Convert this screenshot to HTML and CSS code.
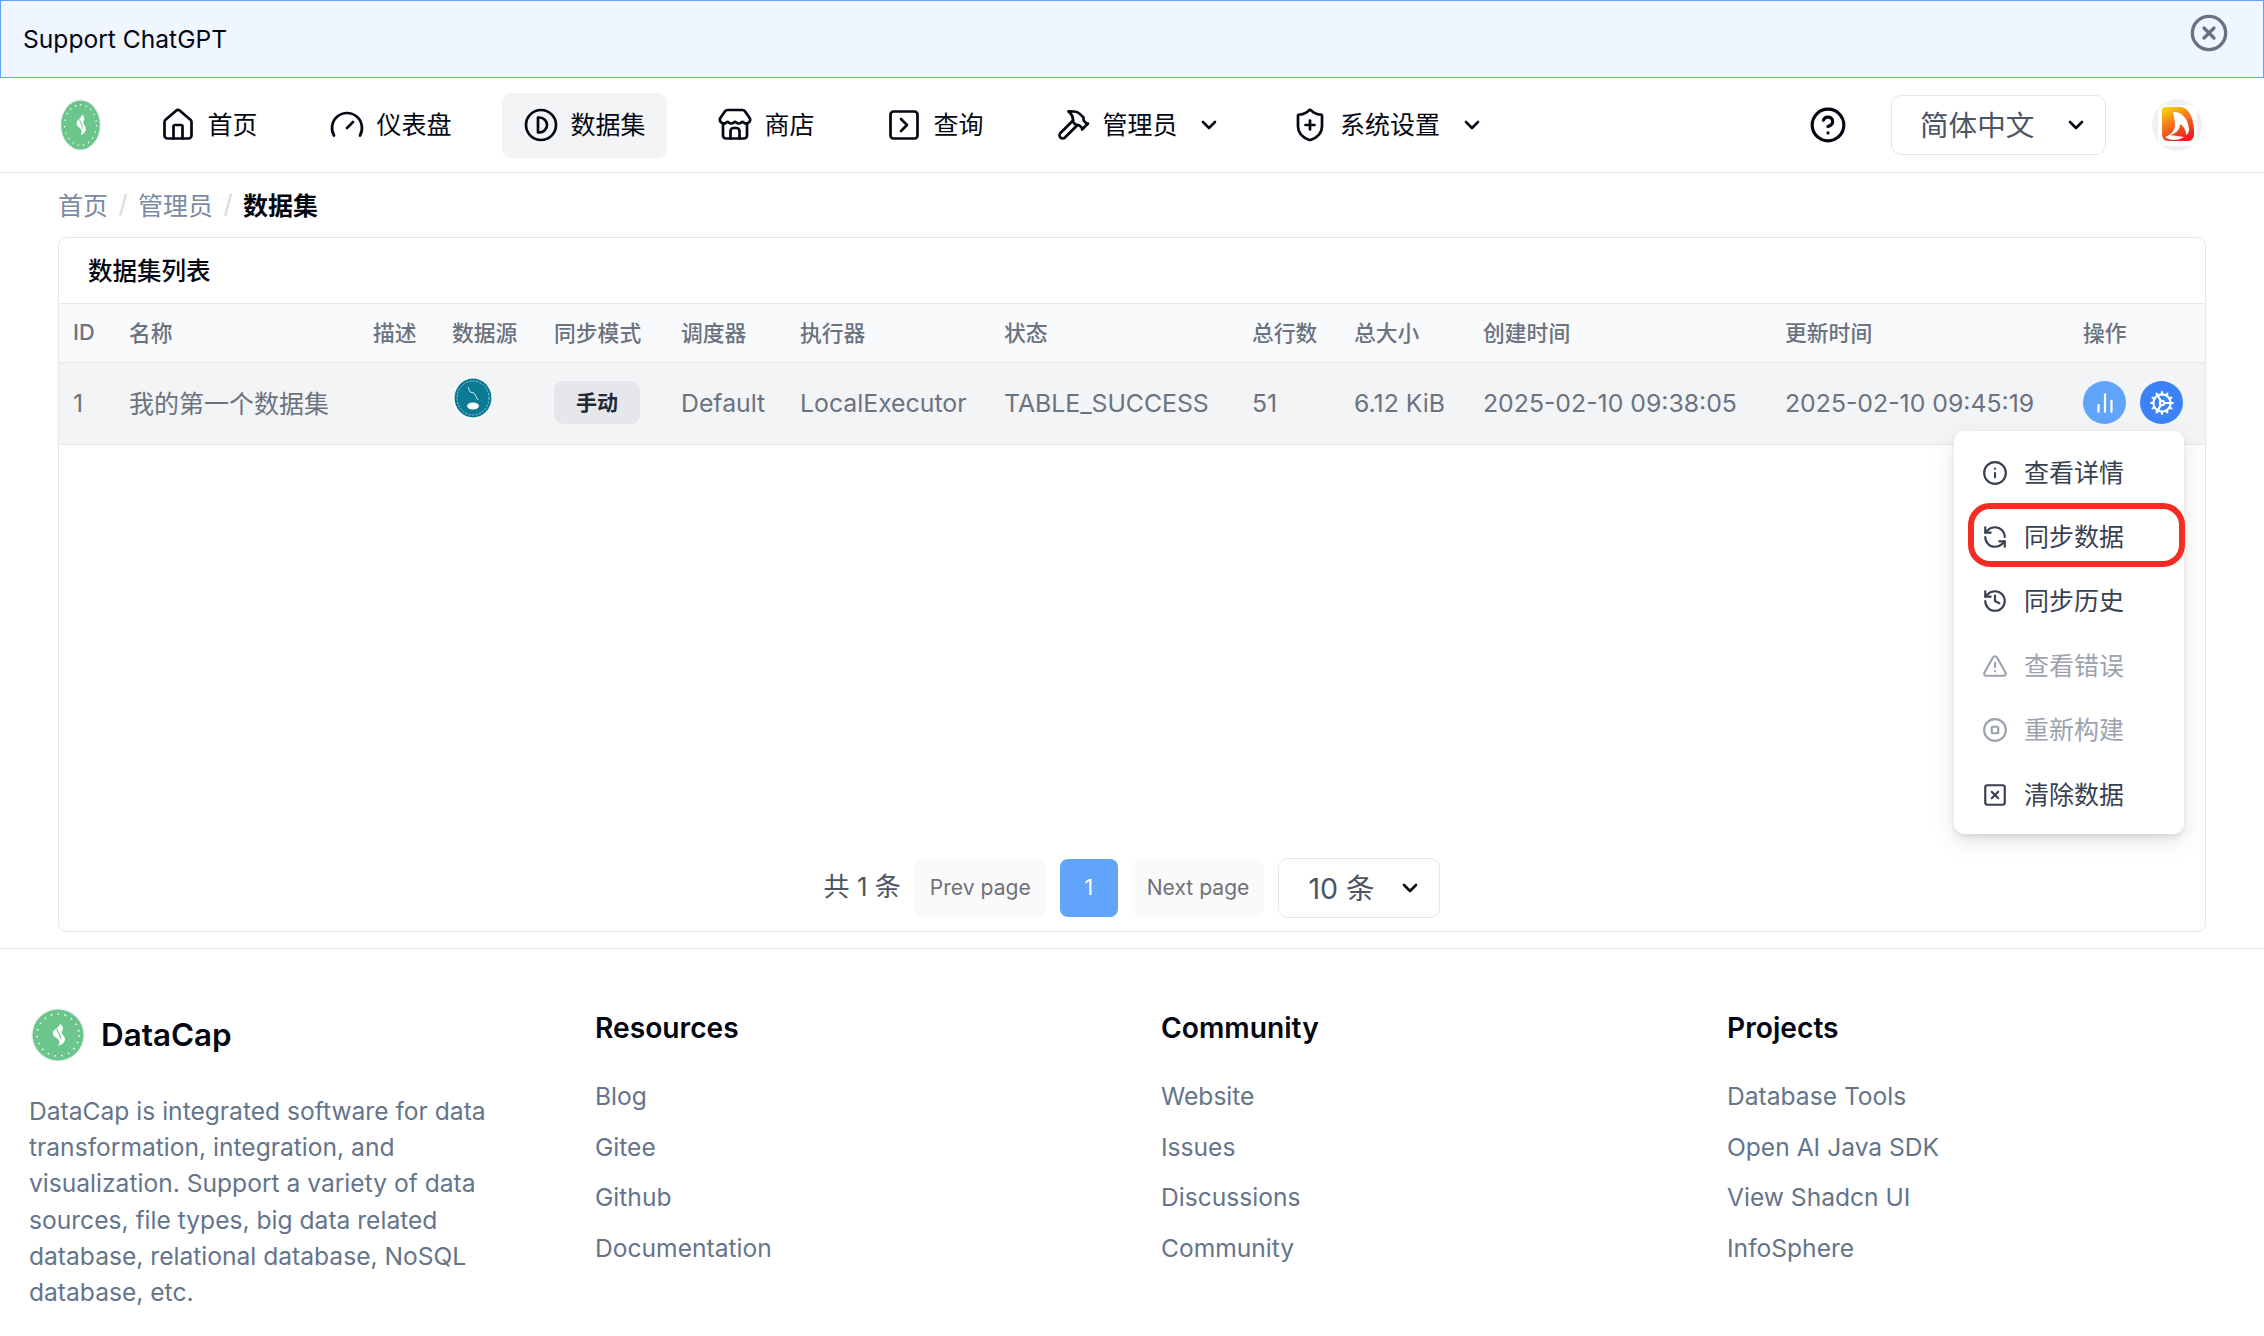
FILE: index.html
```html
<!DOCTYPE html>
<html lang="zh-CN">
<head>
    <meta charset="UTF-8">
    <title>DataCap - 数据集</title>
    <link rel="stylesheet" href="styles.css">
</head>
<body>
    <svg class="defs" width="0" height="0">
        <symbol id="logo" viewBox="0 0 54 54" preserveAspectRatio="none">
            <circle cx="27" cy="27" r="27" fill="#f1f5f9"/>
            <circle cx="27" cy="27" r="25.5" fill="#6cc58a"/>
            <circle cx="27" cy="27" r="21" fill="none" stroke="#fff" stroke-width="1.5" stroke-dasharray="1.5 5.5"/>
            <path d="M29 16c3 2 4 5 2 7-2 3 3 4 3 8 0 4-4 6-7 7 2-2 2-5 0-7-3-2-6-4-5-7 1-3 6-4 7-8z" fill="#fff"/>
            <path d="M26 21c-1 3 5 5 3 10" fill="none" stroke="#6cc58a" stroke-width="1.2"/>
        </symbol>
    </svg>

    <div class="notice">
        <span>Support ChatGPT</span>
        <svg class="notice-close" viewBox="0 0 24 24"><circle cx="12" cy="12" r="10"/><path d="m15 9-6 6"/><path d="m9 9 6 6"/></svg>
    </div>

    <nav class="topnav">
        <svg class="nav-logo"><use href="#logo"/></svg>
        <ul class="nav-list">
            <li class="nav-item">
                <svg class="icon" viewBox="0 0 24 24"><path d="M15 21v-8a1 1 0 0 0-1-1h-4a1 1 0 0 0-1 1v8"/><path d="M3 10a2 2 0 0 1 .709-1.528l7-5.999a2 2 0 0 1 2.582 0l7 5.999A2 2 0 0 1 21 10v9a2 2 0 0 1-2 2H5a2 2 0 0 1-2-2z"/></svg>
                首页
            </li>
            <li class="nav-item">
                <svg class="icon" viewBox="0 0 24 24"><path d="m12 14 4-4"/><path d="M3.34 19a10 10 0 1 1 17.32 0"/></svg>
                仪表盘
            </li>
            <li class="nav-item active">
                <svg class="icon" viewBox="0 0 24 24"><circle cx="12" cy="12" r="10"/><path d="M10 7v10h1a5 5 0 0 0 0-10z"/></svg>
                数据集
            </li>
            <li class="nav-item">
                <svg class="icon" viewBox="0 0 24 24"><path d="M15 21v-5a2 2 0 0 0-2-2h-2a2 2 0 0 0-2 2v5"/><path d="M17.774 10.31a1.12 1.12 0 0 0-1.549 0 2.5 2.5 0 0 1-3.451 0 1.12 1.12 0 0 0-1.548 0 2.5 2.5 0 0 1-3.452 0 1.12 1.12 0 0 0-1.549 0 2.5 2.5 0 0 1-3.77-3.248l2.889-4.184A2 2 0 0 1 7 2h10a2 2 0 0 1 1.653.873l2.895 4.192a2.5 2.5 0 0 1-3.774 3.244"/><path d="M4 10.95V19a2 2 0 0 0 2 2h12a2 2 0 0 0 2-2v-8.05"/></svg>
                商店
            </li>
            <li class="nav-item">
                <svg class="icon" viewBox="0 0 24 24"><rect x="3" y="3" width="18" height="18" rx="2"/><path d="m10 8 4 4-4 4"/></svg>
                查询
            </li>
            <li class="nav-item">
                <svg class="icon" viewBox="0 0 24 24"><path d="m15 12-8.373 8.373a1 1 0 1 1-3-3L12 9"/><path d="m18 15 4-4"/><path d="m21.5 11.5-1.914-1.914A2 2 0 0 1 19 8.172V7l-2.26-2.26a6 6 0 0 0-4.202-1.756L9 2.96l.92.82A6.18 6.18 0 0 1 12 8.4V10l2 2h1.172a2 2 0 0 1 1.414.586L18.5 14.5"/></svg>
                管理员
                <svg class="chevron" viewBox="0 0 24 24"><path d="m6 9 6 6 6-6"/></svg>
            </li>
            <li class="nav-item">
                <svg class="icon" viewBox="0 0 24 24"><path d="M20 13c0 5-3.5 7.5-7.66 8.95a1 1 0 0 1-.67-.01C7.5 20.5 4 18 4 13V6a1 1 0 0 1 1-1c2 0 4.5-1.2 6.24-2.72a1.17 1.17 0 0 1 1.52 0C14.51 3.81 17 5 19 5a1 1 0 0 1 1 1z"/><path d="M9 12h6"/><path d="M12 9v6"/></svg>
                系统设置
                <svg class="chevron" viewBox="0 0 24 24"><path d="m6 9 6 6 6-6"/></svg>
            </li>
        </ul>
        <div class="nav-right">
            <svg class="help" viewBox="0 0 24 24"><circle cx="12" cy="12" r="10"/><path d="M9.09 9a3 3 0 0 1 5.83 1c0 2-3 3-3 3"/><path d="M12 17h.01"/></svg>
            <div class="select lang-select">
                <span>简体中文</span>
                <svg class="chevron" viewBox="0 0 24 24"><path d="m6 9 6 6 6-6"/></svg>
            </div>
            <svg class="avatar" viewBox="0 0 50 52">
                <defs>
                    <linearGradient id="fox" x1="0.1" y1="0" x2="0.6" y2="1">
                        <stop offset="0" stop-color="#fbd800"/>
                        <stop offset="0.45" stop-color="#f47a20"/>
                        <stop offset="1" stop-color="#e5201f"/>
                    </linearGradient>
                </defs>
                <ellipse cx="25" cy="26" rx="25" ry="26" fill="#eef2f7"/>
                <rect x="6" y="6" width="39" height="41" rx="8" fill="#fff"/>
                <path d="M12 8H28C37 8 42 20 42 34 42 39 40 42 36 42H16C12 42 10 39 10 35V10Z" fill="url(#fox)"/>
                <path d="M21 13C28 12 36 18 37 30 37 33 36 35 34 36 34 30 31 27 28 25 28 30 25 34 18 36 22 37 28 37 32 38 26 42 18 42 13 38 18 36 23 32 23 26 23 22 22 18 21 13Z" fill="#fff"/>
            </svg>
        </div>
    </nav>

    <main class="content">
        <div class="breadcrumb">
            <span>首页</span>
            <span class="crumb-sep">/</span>
            <span>管理员</span>
            <span class="crumb-sep">/</span>
            <span class="crumb-current">数据集</span>
        </div>

        <section class="card">
            <h2 class="card-title">数据集列表</h2>
            <table class="data-table">
                <colgroup>
                    <col class="col-id"><col class="col-name"><col class="col-desc"><col class="col-source">
                    <col class="col-mode"><col class="col-sched"><col class="col-exec"><col class="col-state">
                    <col class="col-rows"><col class="col-size"><col class="col-created"><col class="col-updated"><col>
                </colgroup>
                <thead>
                    <tr>
                        <th>ID</th><th>名称</th><th>描述</th><th>数据源</th><th>同步模式</th><th>调度器</th><th>执行器</th>
                        <th>状态</th><th>总行数</th><th>总大小</th><th>创建时间</th><th>更新时间</th><th>操作</th>
                    </tr>
                </thead>
                <tbody>
                    <tr>
                        <td>1</td>
                        <td class="cell-name">我的第一个数据集</td>
                        <td></td>
                        <td>
                            <svg class="source-icon" viewBox="0 0 40 42">
                                <ellipse cx="20" cy="21" rx="20" ry="21" fill="#fff"/>
                                <ellipse cx="20" cy="21" rx="18.5" ry="19.5" fill="#0b7a94"/>
                                <ellipse cx="20" cy="21" rx="16" ry="17" fill="none" stroke="#9fcbd6" stroke-width="1" stroke-dasharray="2 1.5"/>
                                <path d="M15 10l2 5 4 1 4 7" fill="none" stroke="#cfe4ea" stroke-width="1"/>
                                <ellipse cx="20" cy="29" rx="6" ry="3.5" fill="#fff"/>
                            </svg>
                        </td>
                        <td><span class="badge">手动</span></td>
                        <td>Default</td>
                        <td>LocalExecutor</td>
                        <td>TABLE_SUCCESS</td>
                        <td>51</td>
                        <td>6.12 KiB</td>
                        <td>2025-02-10 09:38:05</td>
                        <td>2025-02-10 09:45:19</td>
                        <td>
                            <div class="row-actions">
                                <span class="round-btn light">
                                    <svg viewBox="0 0 24 24"><path d="M18 20V10"/><path d="M12 20V4"/><path d="M6 20v-6"/></svg>
                                </span>
                                <span class="round-btn">
                                    <svg viewBox="0 0 24 24"><path d="M12 20a8 8 0 1 0 0-16 8 8 0 0 0 0 16Z"/><path d="M12 14a2 2 0 1 0 0-4 2 2 0 0 0 0 4Z"/><path d="M12 2v2"/><path d="M12 22v-2"/><path d="m17 20.66-1-1.73"/><path d="M11 10.27 7 3.34"/><path d="m20.66 17-1.73-1"/><path d="m3.34 7 1.73 1"/><path d="M14 12h8"/><path d="M2 12h2"/><path d="m20.66 7-1.73 1"/><path d="m3.34 17 1.73-1"/><path d="m17 3.34-1 1.73"/><path d="m11 13.73-4 6.93"/></svg>
                                </span>
                            </div>
                        </td>
                    </tr>
                </tbody>
            </table>

            <div class="pager">
                <span class="pager-total">共 1 条</span>
                <span class="page-btn">Prev page</span>
                <span class="page-btn current">1</span>
                <span class="page-btn">Next page</span>
                <div class="select size-select">
                    <span>10 条</span>
                    <svg class="chevron" viewBox="0 0 24 24"><path d="m6 9 6 6 6-6"/></svg>
                </div>
            </div>

            <!-- dropdown opened from the gear button -->
            <ul class="menu">
                <li class="menu-item">
                    <svg viewBox="0 0 24 24"><circle cx="12" cy="12" r="10"/><path d="M12 16v-4"/><path d="M12 8h.01"/></svg>
                    查看详情
                </li>
                <li class="menu-item marked">
                    <svg viewBox="0 0 24 24"><path d="M21 12a9 9 0 0 0-9-9 9.75 9.75 0 0 0-6.74 2.74L3 8"/><path d="M3 3v5h5"/><path d="M3 12a9 9 0 0 0 9 9 9.75 9.75 0 0 0 6.74-2.74L21 16"/><path d="M16 16h5v5"/></svg>
                    同步数据
                </li>
                <li class="menu-item">
                    <svg viewBox="0 0 24 24"><path d="M3 12a9 9 0 1 0 9-9 9.75 9.75 0 0 0-6.74 2.74L3 8"/><path d="M3 3v5h5"/><path d="M12 7v5l4 2"/></svg>
                    同步历史
                </li>
                <li class="menu-item disabled">
                    <svg viewBox="0 0 24 24"><path d="m21.73 18-8-14a2 2 0 0 0-3.48 0l-8 14A2 2 0 0 0 4 21h16a2 2 0 0 0 1.73-3"/><path d="M12 9v4"/><path d="M12 17h.01"/></svg>
                    查看错误
                </li>
                <li class="menu-item disabled">
                    <svg viewBox="0 0 24 24"><circle cx="12" cy="12" r="10"/><rect x="9" y="9" width="6" height="6" rx="1"/></svg>
                    重新构建
                </li>
                <li class="menu-item">
                    <svg viewBox="0 0 24 24"><rect x="3" y="3" width="18" height="18" rx="2"/><path d="m15 9-6 6"/><path d="m9 9 6 6"/></svg>
                    清除数据
                </li>
            </ul>
        </section>
    </main>

    <footer class="footer">
        <div class="footer-brand">
            <div class="brand-head">
                <svg class="brand-logo"><use href="#logo"/></svg>
                <span class="brand-name">DataCap</span>
            </div>
            <p class="brand-text">DataCap is integrated software for data transformation, integration, and visualization. Support a variety of data sources, file types, big data related database, relational database, NoSQL database, etc.</p>
        </div>
        <div class="footer-col">
            <h3>Resources</h3>
            <ul>
                <li>Blog</li>
                <li>Gitee</li>
                <li>Github</li>
                <li>Documentation</li>
            </ul>
        </div>
        <div class="footer-col">
            <h3>Community</h3>
            <ul>
                <li>Website</li>
                <li>Issues</li>
                <li>Discussions</li>
                <li>Community</li>
            </ul>
        </div>
        <div class="footer-col">
            <h3>Projects</h3>
            <ul>
                <li>Database Tools</li>
                <li>Open AI Java SDK</li>
                <li>View Shadcn UI</li>
                <li>InfoSphere</li>
            </ul>
        </div>
    </footer>
</body>
</html>
```

FILE: styles.css
```css
* {
    box-sizing: border-box;
}

body {
    margin: 0;
    font-family: Inter, "Noto Sans CJK SC", sans-serif;
    color: #030712;
    background: white;
}

ul {
    list-style: none;
    margin: 0;
    padding: 0;
}

svg {
    flex-shrink: 0;
}

.defs {
    position: absolute;
}

/* shared line icon look */
.icon,
.chevron,
.help,
.notice-close,
.menu-item svg,
.round-btn svg {
    fill: none;
    stroke: currentColor;
    stroke-width: 2;
    stroke-linecap: round;
    stroke-linejoin: round;
}

.icon {
    width: 36px;
    height: 36px;
    stroke-width: 1.8;
}

.chevron {
    width: 24px;
    height: 24px;
    stroke-width: 2.6;
    color: #030712;
}

/* notice bar */
.notice {
    height: 78px;
    display: flex;
    justify-content: space-between;
    padding: 0 34px 0 22px;
    background: #eff6ff;
    border: 1.5px solid #60a5fa;
    font-size: 24.6px;
    line-height: 76px;
}

.notice-close {
    width: 40px;
    height: 40px;
    margin-top: 12px;
    color: #6b7280;
}

/* top navigation */
.topnav {
    height: 95px;
    display: flex;
    align-items: center;
    padding: 0 62px 0 60px;
    border-bottom: 1.5px solid #e5e7eb;
}

.nav-logo {
    width: 41px;
    height: 52px;
}

.nav-list {
    display: flex;
    align-items: center;
    gap: 29px;
    margin-left: 37.5px;
}

.nav-item {
    display: flex;
    align-items: center;
    gap: 12px;
    height: 65px;
    padding: 0 21px;
    border-radius: 9px;
    font-size: 25px;
    line-height: 61px;
    white-space: nowrap;
}

.nav-item .chevron {
    margin-left: 7.5px;
}

.nav-item.active {
    background: #f3f4f6;
}

.nav-right {
    display: flex;
    align-items: center;
    margin-left: auto;
}

.help {
    width: 38px;
    height: 38px;
    margin-right: 44px;
}

.select {
    display: flex;
    align-items: center;
    justify-content: space-between;
    height: 60px;
    border: 1.5px solid #e5e7eb;
    border-radius: 10px;
    color: #4b5563;
    font-size: 28.6px;
    line-height: 55px;
}

.lang-select {
    width: 215px;
    padding: 0 17px 0 28px;
    margin-right: 46px;
}

.avatar {
    width: 50px;
    height: 52px;
}

/* page body */
.content {
    padding: 0 58px;
}

.breadcrumb {
    height: 64px;
    display: flex;
    align-items: center;
    gap: 10.5px;
    padding-bottom: 3px;
    font-size: 25px;
    color: #7a8ba3;
}

.crumb-sep {
    color: #d5dae2;
}

.crumb-current {
    color: #030712;
    font-weight: 600;
}

.card {
    position: relative;
    height: 695px;
    display: flex;
    flex-direction: column;
    border: 1.5px solid #e5e7eb;
    border-radius: 8px;
}

.card-title {
    margin: 0;
    height: 65px;
    padding-left: 29px;
    font-size: 24.5px;
    font-weight: 500;
    line-height: 67px;
}

/* table */
.data-table {
    width: 100%;
    table-layout: fixed;
    border-collapse: collapse;
}

.col-id { width: 56px; }
.col-name { width: 244px; }
.col-desc { width: 79px; }
.col-source { width: 102px; }
.col-mode { width: 127px; }
.col-sched { width: 119px; }
.col-exec { width: 204px; }
.col-state { width: 248px; }
.col-rows { width: 102px; }
.col-size { width: 129px; }
.col-created { width: 302px; }
.col-updated { width: 298px; }

.data-table th {
    height: 59px;
    padding: 0 0 3px 14px;
    background: #f9fafb;
    border-top: 1.5px solid #e5e7eb;
    border-bottom: 1.5px solid #e5e7eb;
    color: #6b7280;
    font-size: 21.8px;
    font-weight: 500;
    text-align: left;
}

.data-table td {
    height: 82px;
    padding: 0 0 2px 14px;
    background: #f3f4f6;
    border-bottom: 1.5px solid #e5e7eb;
    color: #6b7280;
    font-size: 24.8px;
    white-space: nowrap;
}

.data-table .cell-name {
    padding-bottom: 4px;
    font-size: 25px;
}

.source-icon {
    display: block;
    width: 40px;
    height: 42px;
    margin: -9px 0 0 1px;
}

.badge {
    display: inline-block;
    width: 86px;
    height: 43px;
    border-radius: 9px;
    background: #e5e7eb;
    color: #1f2937;
    font-size: 21px;
    font-weight: 600;
    line-height: 43px;
    text-align: center;
}

.row-actions {
    display: flex;
    gap: 14px;
}

.round-btn {
    width: 43px;
    height: 43px;
    display: flex;
    align-items: center;
    justify-content: center;
    border-radius: 50%;
    background: #3b82f6;
    color: white;
}

.round-btn.light {
    background: #60a5fa;
}

.round-btn svg {
    width: 26px;
    height: 26px;
}

/* pagination */
.pager {
    margin-top: auto;
    padding-bottom: 13px;
    display: flex;
    align-items: center;
    justify-content: center;
    gap: 14px;
}

.pager-total {
    color: #4b5563;
    font-size: 26px;
    line-height: 36px;
    padding-bottom: 2px;
}

.page-btn {
    height: 58px;
    padding: 0 15px;
    border-radius: 8px;
    background: #fafafa;
    color: #71717a;
    font-size: 21.1px;
    line-height: 58px;
}

.page-btn.current {
    width: 58px;
    padding: 0;
    background: #60a5fa;
    color: white;
    text-align: center;
}

.size-select {
    width: 162px;
    padding: 0 17px 0 29px;
}

/* dropdown */
.menu {
    position: absolute;
    top: 193px;
    right: 21px;
    width: 230px;
    padding: 9.5px 0 7.5px;
    background: white;
    border-radius: 10px;
    box-shadow: 0 4px 6px -1px rgba(0,0,0,0.1), 0 8px 24px rgba(0,0,0,0.1);
}

.menu-item {
    position: relative;
    display: flex;
    align-items: center;
    gap: 16px;
    height: 64.4px;
    padding-left: 28px;
    color: #374151;
    font-size: 25px;
    line-height: 60px;
}

.menu-item svg {
    width: 26px;
    height: 26px;
}

.menu-item.disabled {
    color: #9ca3af;
}

/* red marker drawn over the screenshot */
.menu-item.marked::after {
    content: "";
    box-sizing: border-box;
    position: absolute;
    top: -1.5px;
    left: 14px;
    width: 217px;
    height: 64px;
    border: 6px solid #f42c24;
    border-radius: 22px;
}

/* footer */
.footer {
    margin-top: 16px;
    height: 388px;
    display: grid;
    grid-template-columns: repeat(4, 566px);
    padding: 50px 0 0 29px;
    border-top: 1.5px solid #e5e7eb;
}

.brand-head {
    display: flex;
    align-items: center;
    gap: 16px;
    margin: 9px 0 0 2px;
}

.brand-logo {
    width: 54px;
    height: 54px;
}

.brand-name {
    font-size: 31.4px;
    font-weight: 600;
}

.brand-text {
    width: 490px;
    margin: 31px 0 0;
    color: #64748b;
    font-size: 24.6px;
    line-height: 36.2px;
}

.footer-col h3 {
    margin: 0 0 12px;
    height: 60px;
    font-size: 28.2px;
    font-weight: 600;
    line-height: 58px;
}

.footer-col li {
    height: 50.6px;
    color: #64748b;
    font-size: 24.6px;
    line-height: 50.6px;
}
```
